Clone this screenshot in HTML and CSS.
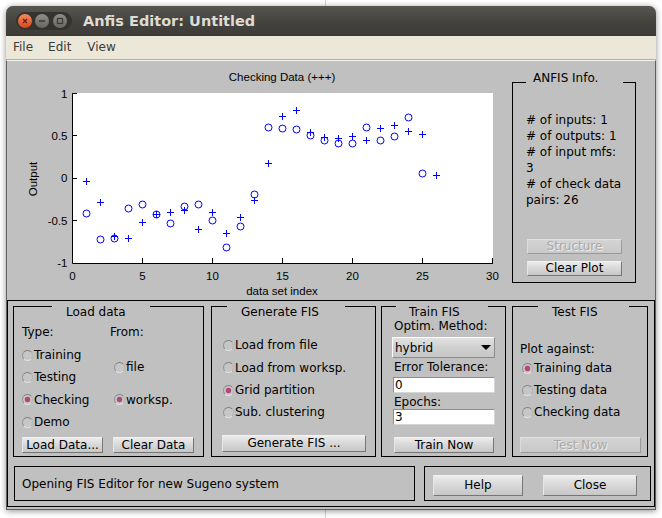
FILE: index.html
```html
<!DOCTYPE html>
<html>
<head>
<meta charset="utf-8">
<title>Anfis Editor: Untitled</title>
<link rel="stylesheet" href="styles.css">
</head>
<body>
<div class="window">
  <div class="titlebar">
    <svg class="wbtns" width="56" height="18" viewBox="0 0 56 18">
      <defs>
        <linearGradient id="gc" x1="0" y1="0" x2="0" y2="1"><stop offset="0" stop-color="#f48c5e"/><stop offset="1" stop-color="#d8451a"/></linearGradient>
        <linearGradient id="gg" x1="0" y1="0" x2="0" y2="1"><stop offset="0" stop-color="#908e88"/><stop offset="1" stop-color="#686661"/></linearGradient>
      </defs>
      <rect x="0" y="0" width="56" height="18" rx="9" fill="#34332f"/>
      <circle cx="9" cy="9" r="7" fill="url(#gc)"/>
      <path d="M7 7l4 4M11 7l-4 4" stroke="#5b2411" stroke-width="1.2"/>
      <circle cx="26" cy="9" r="7" fill="url(#gg)"/>
      <path d="M23 9h6" stroke="#3a3935" stroke-width="1.5"/>
      <circle cx="44" cy="9" r="7" fill="url(#gg)"/>
      <rect x="41.5" y="6.5" width="5" height="5" fill="none" stroke="#3a3935" stroke-width="1.2"/>
    </svg>
    <span class="title">Anfis Editor: Untitled</span>
  </div>
  <div class="menubar">
    <span class="menu m-file">File</span>
    <span class="menu m-edit">Edit</span>
    <span class="menu m-view">View</span>
  </div>
  <div class="content">
    <div class="upper">
      <svg class="plot" width="505" height="239" viewBox="7 61 505 239">
        <rect x="72" y="93" width="421" height="170" fill="#fff"/>
        <path d="M72.5 93V263.5H493" stroke="#000" fill="none"/>
        <path d="M72 93.5h5M72 135.5h5M72 178.5h5M72 220.5h5M142.5 263v-5M212.5 263v-5M282.5 263v-5M352.5 263v-5M422.5 263v-5M492.5 263v-5" stroke="#000" fill="none"/>
        <g class="ptxt">
          <text x="282" y="81" text-anchor="middle">Checking Data (+++)</text>
          <text x="67.5" y="97.5" text-anchor="end">1</text>
          <text x="67.5" y="139.5" text-anchor="end">0.5</text>
          <text x="67.5" y="182" text-anchor="end">0</text>
          <text x="67.5" y="224.5" text-anchor="end">-0.5</text>
          <text x="67.5" y="267" text-anchor="end">-1</text>
          <text x="72.5" y="280" text-anchor="middle">0</text>
          <text x="142.5" y="280" text-anchor="middle">5</text>
          <text x="212.5" y="280" text-anchor="middle">10</text>
          <text x="282.5" y="280" text-anchor="middle">15</text>
          <text x="352.5" y="280" text-anchor="middle">20</text>
          <text x="422.5" y="280" text-anchor="middle">25</text>
          <text x="492.5" y="280" text-anchor="middle">30</text>
          <text x="282" y="295" text-anchor="middle">data set index</text>
          <text x="37" y="179" text-anchor="middle" transform="rotate(-90 37 179)">Output</text>
        </g>
        <path stroke="#0000ff" fill="none" d="M83 181.5h7M86.5 178v7M97 202.5h7M100.5 199v7M111 236.5h7M114.5 233v7M125 238.5h7M128.5 235v7M139 222.5h7M142.5 219v7M153 214.5h7M156.5 211v7M167 212.5h7M170.5 209v7M181 210.5h7M184.5 207v7M195 229.5h7M198.5 226v7M209 212.5h7M212.5 209v7M223 233.5h7M226.5 230v7M237 217.5h7M240.5 214v7M251 200.5h7M254.5 197v7M265 163.5h7M268.5 160v7M279 116.5h7M282.5 113v7M293 110.5h7M296.5 107v7M307 132.5h7M310.5 129v7M321 137.5h7M324.5 134v7M335 138.5h7M338.5 135v7M349 136.5h7M352.5 133v7M363 140.5h7M366.5 137v7M377 128.5h7M380.5 125v7M391 125.5h7M394.5 122v7M405 131.5h7M408.5 128v7M419 134.5h7M422.5 131v7M433 175.5h7M436.5 172v7"/>
        <g stroke="#0000ff" fill="none">
          <circle cx="86.5" cy="213.5" r="3.5"/>
          <circle cx="100.5" cy="239.5" r="3.5"/>
          <circle cx="114.5" cy="238.5" r="3.5"/>
          <circle cx="128.5" cy="208.5" r="3.5"/>
          <circle cx="142.5" cy="204.5" r="3.5"/>
          <circle cx="156.5" cy="214.5" r="3.5"/>
          <circle cx="170.5" cy="223.5" r="3.5"/>
          <circle cx="184.5" cy="206.5" r="3.5"/>
          <circle cx="198.5" cy="204.5" r="3.5"/>
          <circle cx="212.5" cy="220.5" r="3.5"/>
          <circle cx="226.5" cy="247.5" r="3.5"/>
          <circle cx="240.5" cy="226.5" r="3.5"/>
          <circle cx="254.5" cy="194.5" r="3.5"/>
          <circle cx="268.5" cy="127.5" r="3.5"/>
          <circle cx="282.5" cy="128.5" r="3.5"/>
          <circle cx="296.5" cy="129.5" r="3.5"/>
          <circle cx="310.5" cy="135.5" r="3.5"/>
          <circle cx="324.5" cy="140.5" r="3.5"/>
          <circle cx="338.5" cy="143.5" r="3.5"/>
          <circle cx="352.5" cy="143.5" r="3.5"/>
          <circle cx="366.5" cy="127.5" r="3.5"/>
          <circle cx="380.5" cy="140.5" r="3.5"/>
          <circle cx="394.5" cy="136.5" r="3.5"/>
          <circle cx="408.5" cy="117.5" r="3.5"/>
          <circle cx="422.5" cy="173.5" r="3.5"/>
        </g>
      </svg>
      <div class="frame info">
        <div class="legend">ANFIS Info.</div>
        <div class="info-text"># of inputs: 1<br># of outputs: 1<br># of input mfs:<br>3<br># of check data<br>pairs: 26</div>
        <div class="btn disabled b-struct">Structure</div>
        <div class="btn b-clearplot">Clear Plot</div>
      </div>
    </div>
    <div class="panel">
      <div class="frames">
        <div class="frame f-load">
          <div class="legend">Load data</div>
          <div class="ld-head"><span class="type">Type:</span><span>From:</span></div>
          <div class="ld-grid">
            <div class="radio g-a"><span class="rb"></span>Training</div>
            <div class="radio g-b"><span class="rb"></span>Testing</div>
            <div class="radio g-c"><span class="rb on"></span>Checking</div>
            <div class="radio g-d"><span class="rb"></span>Demo</div>
            <div class="radio g-file"><span class="rb"></span>file</div>
            <div class="radio g-ws"><span class="rb on"></span>worksp.</div>
          </div>
          <div class="btnrow">
            <div class="btn b-load">Load Data...</div>
            <div class="btn b-cleardata">Clear Data</div>
          </div>
        </div>
        <div class="frame f-gen">
          <div class="legend">Generate FIS</div>
          <div class="radios">
            <div class="radio"><span class="rb"></span>Load from file</div>
            <div class="radio r23"><span class="rb"></span>Load from worksp.</div>
            <div class="radio"><span class="rb on"></span>Grid partition</div>
            <div class="radio"><span class="rb"></span>Sub. clustering</div>
          </div>
          <div class="btn b-gen">Generate FIS ...</div>
        </div>
        <div class="frame f-train">
          <div class="legend">Train FIS</div>
          <div class="lbl l-optim">Optim. Method:</div>
          <div class="dd"><span>hybrid</span><span class="arrow"></span></div>
          <div class="lbl l-err">Error Tolerance:</div>
          <div class="tx tx-err">0</div>
          <div class="lbl l-ep">Epochs:</div>
          <div class="tx tx-ep">3</div>
          <div class="btn b-train">Train Now</div>
        </div>
        <div class="frame f-test">
          <div class="legend">Test FIS</div>
          <div class="lbl l-plot">Plot against:</div>
          <div class="radios">
            <div class="radio"><span class="rb on"></span>Training data</div>
            <div class="radio"><span class="rb"></span>Testing data</div>
            <div class="radio"><span class="rb"></span>Checking data</div>
          </div>
          <div class="btn disabled b-test">Test Now</div>
        </div>
      </div>
      <div class="bottom">
        <div class="status">Opening FIS Editor for new Sugeno system</div>
        <div class="hcbox">
          <div class="btn big b-help">Help</div>
          <div class="btn big b-close">Close</div>
        </div>
      </div>
    </div>
  </div>
</div>
</body>
</html>
```
FILE: styles.css
```css
* { box-sizing: border-box; }
html, body { margin: 0; padding: 0; }
body {
  width: 662px;
  height: 518px;
  overflow: hidden;
  background: linear-gradient(to right, #ffffff 0, #ffffff 325px, #d4d4d4 325px, #d4d4d4 326px, #ffffff 326px);
  font-family: "DejaVu Sans", "Noto Sans", sans-serif;
  font-size: 12px;
  color: #000;
}
.window {
  margin: 6px 0 0 6px;
  width: 650px;
  height: 504px;
  border-radius: 7px 7px 0 0;
  box-shadow: 0 1px 6px rgba(0, 0, 0, 0.45);
  overflow: hidden;
  background: #c0c0c0;
}
.titlebar {
  height: 30px;
  display: flex;
  align-items: center;
  background: linear-gradient(#57564f, #45443f 50%, #3c3b37);
}
.wbtns { margin-left: 10px; flex: none; }
.title {
  margin-left: 11px;
  font-family: "DejaVu Sans", sans-serif;
  font-weight: bold;
  font-size: 14.5px;
  color: #dfdbd2;
}
.menubar {
  height: 24px;
  display: flex;
  align-items: center;
  background: #ebe8da;
  border-bottom: 1px solid #b3b0a5;
  color: #3c3b37;
  padding-left: 7px;
  padding-bottom: 1px;
}
.m-edit { margin-left: 15px; }
.m-view { margin-left: 16px; }
.content {
  height: 450px;
  border-top: 1px solid #f4f3ee;
  border-left: 1px solid #5f5f5c;
  border-right: 1px solid #5f5f5c;
  border-bottom: 1px solid #5f5f5c;
  padding-bottom: 2px;
  background: #c0c0c0;
}
.upper { height: 239px; display: flex; }
.plot { flex: none; display: block; }
.ptxt text { font-family: "Liberation Sans", Arial, sans-serif; font-size: 11.5px; fill: #000; }

.frame {
  border: 1px solid #000;
  display: flex;
  flex-direction: column;
  align-items: flex-start;
  flex: none;
}
.legend {
  height: 14px;
  line-height: 14px;
  margin-top: -2px;
  background: #c0c0c0;
  white-space: nowrap;
}
.lbl { height: 14px; line-height: 14px; white-space: nowrap; }

.info { width: 124px; height: 201px; margin-top: 21px; }
.info .legend { margin-top: -12px; margin-left: 13px; width: 97px; padding-left: 7px; }
.info-text { margin-top: 27px; padding-left: 13px; line-height: 16px; white-space: nowrap; }

.btn {
  text-align: center;
  white-space: nowrap;
  border: 1px solid;
  border-color: #f2f2f2 #767676 #767676 #e6e6e6;
  background: linear-gradient(#ececec, #d9d9d9 45%, #c7c7c7);
  flex: none;
}
.btn.disabled { color: #a9a9a9; text-shadow: 1px 1px 0 #ededed; border-color: #e2e2e2 #9a9a9a #9a9a9a #dcdcdc; background: linear-gradient(#d4d4d4, #c8c8c8); }
.b-struct { margin-top: 31px; margin-left: 14px; width: 95px; height: 15px; line-height: 13px; }
.b-clearplot { margin-top: 7px; margin-left: 14px; width: 95px; height: 15px; line-height: 13px; }

.panel {
  height: 207px;
  border: 1px solid #000;
  padding-top: 5px;
}
.frames { display: flex; padding-left: 5px; }
.frames .frame { height: 151px; }

.radio { display: flex; align-items: center; white-space: nowrap; }
.rb {
  width: 11px;
  height: 11px;
  border-radius: 50%;
  border: 1px solid;
  border-color: #7e7e7e #b4b4b4 #e2e2e2 #969696;
  background: #c6c6c6;
  margin-right: 1px;
  flex: none;
}
.rb.on { background: radial-gradient(circle, #b5477c 0, #b5477c 2.4px, #c6c6c6 3.2px); }

.f-load { width: 191px; }
.f-load .legend { margin-left: 38px; width: 98px; padding-left: 14px; }
.ld-head { margin-top: 6px; padding-left: 8px; display: flex; height: 14px; line-height: 14px; }
.ld-head .type { width: 88px; }
.ld-grid {
  margin-top: 5px;
  margin-left: 8px;
  display: grid;
  grid-template-columns: 92px auto;
  grid-template-rows: 22px 22px 23px 22px;
}
.g-a { grid-column: 1; grid-row: 1; }
.g-b { grid-column: 1; grid-row: 2; }
.g-c { grid-column: 1; grid-row: 3; }
.g-d { grid-column: 1; grid-row: 4; }
.g-file { grid-column: 2; grid-row: 1 / 3; margin-top: 2px; }
.g-ws { grid-column: 2; grid-row: 3; }
.btnrow { margin-top: 4px; margin-left: 8px; display: flex; }
.b-load, .b-cleardata { width: 81px; height: 16px; line-height: 14px; }
.b-cleardata { margin-left: 10px; }

.f-gen { width: 165px; margin-left: 7px; }
.f-gen .legend { margin-left: 15px; width: 118px; padding-left: 14px; }
.f-gen .radios { margin-top: 15px; margin-left: 11px; display: grid; grid-template-rows: 22px 23px 22px 22px; }
.b-gen { margin-top: 12px; margin-left: 10px; width: 144px; height: 17px; line-height: 15px; }

.f-train { width: 125px; margin-left: 5px; }
.f-train .legend { margin-left: 14px; width: 92px; padding-left: 13px; }
.f-train .lbl { padding-left: 12px; }
.l-err { margin-top: 2px; }
.l-ep { margin-top: 2px; }
.dd {
  margin-top: 4px;
  margin-left: 10px;
  width: 103px;
  height: 21px;
  display: flex;
  align-items: center;
  justify-content: space-between;
  padding: 0 2px 0 2px;
  border: 1px solid;
  border-color: #fbfbfb #8a8a8a #8a8a8a #fbfbfb;
  background: linear-gradient(#e2e2e2, #d0d0d0 50%, #c6c6c6);
}
.arrow {
  width: 0;
  height: 0;
  border-left: 5px solid transparent;
  border-right: 5px solid transparent;
  border-top: 5px solid #000;
  margin-right: 1px;
}
.tx {
  margin-left: 11px;
  width: 102px;
  height: 16px;
  line-height: 14px;
  padding-left: 1px;
  background: #fff;
  border: 1px solid;
  border-color: #8e8e8e #d6d6d6 #d6d6d6 #8e8e8e;
}
.tx-err { margin-top: 3px; }
.b-train { margin-top: 12px; margin-left: 12px; width: 100px; height: 16px; line-height: 14px; }

.f-test { width: 136px; margin-left: 6px; }
.f-test .legend { margin-left: 25px; width: 91px; padding-left: 14px; }
.l-plot { margin-top: 23px; padding-left: 7px; }
.f-test .radios { margin-top: 1px; margin-left: 9px; display: grid; grid-template-rows: 22px 22px 22px; }
.b-test { margin-top: 14px; margin-left: 7px; width: 121px; height: 16px; line-height: 14px; }

.bottom { display: flex; margin-top: 9px; }
.status {
  margin-left: 6px;
  width: 401px;
  height: 35px;
  border: 1px solid #000;
  display: flex;
  align-items: center;
  padding-left: 7px;
  white-space: nowrap;
}
.hcbox {
  margin-left: 9px;
  width: 227px;
  height: 35px;
  border: 1px solid #000;
  display: flex;
  padding: 8px 0 0 8px;
}
.btn.big { height: 21px; line-height: 19px; }
.b-help { width: 90px; }
.b-close { width: 94px; margin-left: 20px; }
```
